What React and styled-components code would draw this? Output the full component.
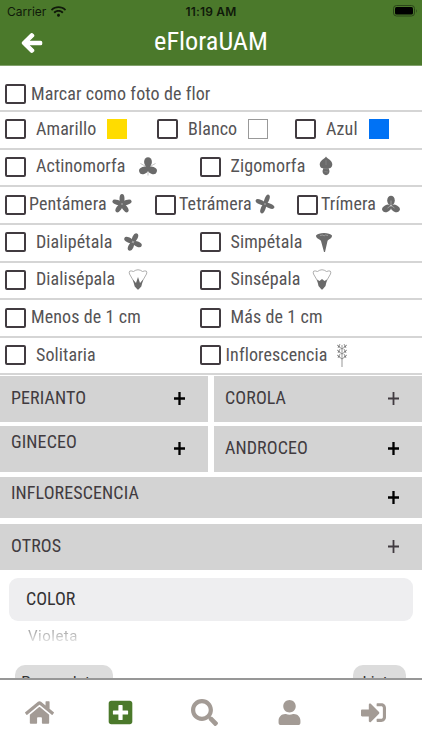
import React, { useState } from 'react';
import styled, { createGlobalStyle } from 'styled-components';
import { FaArrowLeft, FaHome, FaPlusSquare, FaSearch, FaUser, FaSignInAlt, FaWifi } from 'react-icons/fa';

const GlobalStyle = createGlobalStyle`
  * {
    box-sizing: border-box;
  }
  body {
    margin: 0;
    background: #fff;
    color: #555355;
    font-family: 'Roboto Condensed', Roboto, sans-serif;
    font-stretch: 75%;
    font-size: 18px;
  }
`;

const Screen = styled.div`
  width: 422px;
  height: 750px;
  overflow: hidden;
  display: flex;
  flex-direction: column;
`;

const Header = styled.header`
  height: 66px;
  flex-shrink: 0;
  background: #4b792b;
  border-bottom: 1px solid #82a16c;
`;

const StatusBar = styled.div`
  height: 22px;
  padding: 0 7px;
  display: grid;
  grid-template-columns: 1fr auto 1fr;
  align-items: center;
  color: #10190a;
  font-family: Inter, sans-serif;
  font-stretch: 100%;
  font-size: 12px;
`;

const Carrier = styled.div`
  display: flex;
  align-items: center;
  gap: 5px;
`;

const Clock = styled.div`
  font-weight: 600;
  letter-spacing: 0.2px;
`;

const BatteryIcon = styled.svg`
  justify-self: end;
  margin-right: -3px;
  margin-top: -1px;
`;

const TitleBar = styled.div`
  height: 38px;
  padding: 0 21px;
  display: grid;
  grid-template-columns: 1fr auto 1fr;
  align-items: center;
  color: #fff;
`;

const BackIcon = styled(FaArrowLeft)`
  margin-top: 4px;
  font-size: 22px;
  stroke: #fff;
  stroke-width: 30px;
`;

const Title = styled.h1`
  margin: 0;
  font-size: 26.3px;
  font-weight: 400;
  line-height: 38px;
`;

const Content = styled.main`
  flex: 1;
  min-height: 0;
  overflow: hidden;
`;

const OptionRow = styled.div`
  display: grid;
  grid-template-columns: ${({ $columns }) => $columns || '1fr'};
  align-items: center;
  height: ${({ $height }) => $height || 37.65}px;
  padding: ${({ $height }) => ($height ? '13px' : '0')} 0 1px 5px;
  border-bottom: 2px solid #d5d5d5;
`;

const Option = styled.label`
  display: flex;
  align-items: center;
  height: 22px;
  white-space: nowrap;
`;

const Box = styled.span`
  width: 21px;
  height: 20px;
  flex-shrink: 0;
  border: 2px solid #413b40;
  border-radius: 2px;
  background: ${({ $checked }) => ($checked ? '#4b792b' : '#fff')};
`;

const OptionText = styled.span`
  margin-left: ${({ $gap }) => $gap}px;
  margin-top: -1px;
  line-height: 22px;
  letter-spacing: 0.1px;
`;

const Swatch = styled.span`
  width: 20px;
  height: 20px;
  margin-left: 11px;
  background: ${({ $color }) => $color};
  border: 1px solid ${({ $border, $color }) => $border || $color};
`;

const Drawing = styled.svg`
  width: 20px;
  height: 24px;
  flex-shrink: 0;
  margin-top: -1px;
  margin-left: ${({ $gap }) => $gap}px;
  color: #6a6a6a;
`;

const PanelGrid = styled.div`
  display: grid;
  grid-template-columns: 208px 208px;
  column-gap: 6px;
  row-gap: 4px;
  padding-top: 1px;
`;

const Panel = styled.button`
  display: flex;
  justify-content: space-between;
  align-items: center;
  width: 100%;
  height: ${({ $height }) => $height || 46}px;
  margin: 0;
  margin-top: ${({ $top }) => $top || 0}px;
  padding: 0 22px 2px 11px;
  border: 0;
  background: #d3d3d3;
  color: #413b40;
  font: inherit;
  text-align: left;
`;

const PanelTitle = styled.span`
  line-height: 22px;
  padding-bottom: ${({ $raise }) => $raise || 0}px;
  letter-spacing: 0.1px;
`;

const Plus = styled.svg`
  width: 13px;
  height: 15px;
  margin-top: 1px;
  color: ${({ $strong }) => ($strong ? '#000' : '#413b40')};
`;

const ColorHeading = styled.div`
  height: 43px;
  margin: 8px 9px 0;
  padding-left: 17px;
  border-radius: 9px;
  background: #eeeef0;
  color: #343234;
  line-height: 42px;
`;

const ColorValue = styled.div`
  height: 20px;
  margin: 0 28px;
  padding-top: 5px;
  overflow: hidden;
  font-family: Roboto, sans-serif;
  font-stretch: 100%;
  font-size: 15px;
  line-height: 20px;
  letter-spacing: 0.5px;
  color: transparent;
  background: linear-gradient(#999 35%, #ddd 100%);
  background-clip: text;
`;

const Actions = styled.div`
  display: flex;
  justify-content: space-between;
  margin-top: 24px;
  padding: 0 16px 0 15px;
`;

const ActionButton = styled.button`
  display: flex;
  align-items: flex-start;
  justify-content: center;
  width: ${({ $width }) => $width}px;
  height: 34px;
  padding: 3px 0 0;
  border: 0;
  border-radius: 10px;
  background: #dcdcdc;
  color: #333;
  font-family: Roboto, sans-serif;
  font-stretch: 100%;
  font-size: 15.6px;
  line-height: 30px;
`;

const TabBar = styled.nav`
  height: 72px;
  flex-shrink: 0;
  display: grid;
  grid-template-columns: 79px 83px 84px 86px 82px;
  justify-items: center;
  align-items: start;
  padding-top: 18px;
  border-top: 2px solid #979797;
  background: #fff;
`;

const Tab = styled.button`
  display: flex;
  align-items: center;
  height: 28px;
  margin: 0;
  padding: 0;
  border: 0;
  background: none;
  color: ${({ $active }) => ($active ? '#4b792b' : '#a39b95')};
  font-size: ${({ $size }) => $size}px;
`;

const Petals = ({ angles, gap, ry = 5, rx = 3, y = 12 }) => (
  <Drawing $gap={gap} viewBox="0 0 20 24">
    <g fill="currentColor">
      {angles.map((a) => (
        <ellipse key={a} cx="10" cy={y - 5} rx={rx} ry={ry} transform={`rotate(${a} 10 ${y})`} />
      ))}
    </g>
    <circle cx="10" cy={y} r="1" fill="#999" />
  </Drawing>
);

const ThreePetals = ({ gap }) => (
  <Drawing $gap={gap} viewBox="0 0 20 24">
    <path d="M10 14V21.5M10 13.5L2.5 9.5M10 13.5L17.5 9.5" stroke="#aaa" strokeWidth=".7" />
    <g fill="currentColor">
      <ellipse cx="10" cy="8" rx="3.9" ry="4.8" />
      <ellipse cx="5.6" cy="16.4" rx="4.6" ry="3.5" transform="rotate(-20 5.6 16.4)" />
      <ellipse cx="14.4" cy="16.4" rx="4.6" ry="3.5" transform="rotate(20 14.4 16.4)" />
      <circle cx="10" cy="13.5" r="2.5" />
    </g>
  </Drawing>
);

const Trefoil = ({ gap }) => (
  <Drawing $gap={gap} viewBox="0 0 20 24">
    <g fill="currentColor">
      <ellipse cx="10" cy="8.5" rx="3.8" ry="4.8" />
      <ellipse cx="5.6" cy="16.4" rx="4.7" ry="3.4" transform="rotate(-28 5.6 16.4)" />
      <ellipse cx="14.4" cy="16.4" rx="4.7" ry="3.4" transform="rotate(28 14.4 16.4)" />
    </g>
    <path d="M10 8.5V13.5L6.5 16M10 13.5L13.5 16" fill="none" stroke="#b5b5b5" strokeWidth=".7" />
  </Drawing>
);

const Orchid = ({ gap }) => (
  <Drawing $gap={gap} viewBox="0 0 20 24">
    <path
      d="M10 2.5C11.5 5 16.3 6 16.3 10.5C16 14.5 13 14.5 12.6 14.2L13.5 17C13.5 22.5 6.5 22.5 6.5 17L7.4 14.2C6 14.5 4 14 3.7 10.5C4 6 8.5 5 10 2.5Z"
      fill="currentColor"
    />
    <path d="M10 6V11M8 14.5L12 15M8.5 17.5L12 18" stroke="#999" strokeWidth=".5" />
  </Drawing>
);

const Funnel = ({ gap }) => (
  <Drawing $gap={gap} viewBox="0 0 20 24">
    <path
      d="M2 5.5C4 2 16 2 18 5.5C18 9 14.5 9 13.5 11L11 22H10L7 11C6 9 2 9 2 5.5Z"
      fill="currentColor"
    />
    <path d="M6 5.5L9 5L10 6L11.5 5L14 5.5" fill="none" stroke="#aaa" strokeWidth=".7" />
  </Drawing>
);

const Calyx = ({ gap, fused }) => (
  <Drawing $gap={gap} viewBox="0 0 20 24">
    <path
      d="M9 20L1.5 7Q0 2.5 5.5 4.5Q10 1 14.5 4.5Q20 2.5 18.5 7L11 20"
      fill="none"
      stroke="#999"
      strokeWidth=".8"
    />
    <path
      d={
        fused
          ? 'M5 12.5L7.5 14L10 12L12.5 14L15 12.5L13.5 19L10.5 22.5H9.5L6.5 19Z'
          : 'M4.8 12.5L8 16L10 10L12 16L15.2 12.5L13.3 19.5L10.5 22.5H9.5L6.7 19.5Z'
      }
      fill="currentColor"
    />
  </Drawing>
);

const Spike = ({ gap }) => (
  <Drawing $gap={gap} viewBox="0 0 20 24">
    <path
      d="M10 2V24M10 6L6 3M10 6L14 3M10 11L6 8M10 11L14 8M10 16L6 13M10 16L14 13M5 2L8 4M8 1L6 5M12 1L14 5M12 4L15 2M5 7L8 9M8 6L6 10M12 6L14 10M12 9L15 7M5 12L8 14M8 11L6 15M12 11L14 15M12 14L15 12"
      stroke="currentColor"
      strokeWidth=".7"
    />
  </Drawing>
);

const PlusIcon = ({ strong }) => (
  <Plus $strong={strong} viewBox="0 0 13 15">
    <path d="M6.5 1V14M1 7.5H12" stroke="currentColor" strokeWidth={strong ? 2.3 : 1.8} />
  </Plus>
);

function CheckOption({ text, gap = 10, children }) {
  const [checked, setChecked] = useState(false);

  return (
    <Option onClick={() => setChecked(!checked)}>
      <Box $checked={checked} />
      <OptionText $gap={gap}>{text}</OptionText>
      {children}
    </Option>
  );
}

const HALVES = '194.5px 1fr';

function App() {
  return (
    <Screen>
      <GlobalStyle />
      <Header>
        <StatusBar>
          <Carrier>
            Carrier <FaWifi size={15} />
          </Carrier>
          <Clock>11:19 AM</Clock>
          <BatteryIcon width="25" height="12" viewBox="0 0 25 12">
            <rect x=".5" y=".5" width="21" height="10.5" rx="3" fill="none" stroke="#2b4519" />
            <rect x="2" y="2" width="18" height="7.5" rx="1.5" fill="#000" />
            <path d="M23 4V8Q24.5 6 23 4Z" fill="#2b4519" />
          </BatteryIcon>
        </StatusBar>
        <TitleBar>
          <BackIcon />
          <Title>eFloraUAM</Title>
        </TitleBar>
      </Header>

      <Content>
        <OptionRow $height={46}>
          <CheckOption text="Marcar como foto de flor" gap={5} />
        </OptionRow>
        <OptionRow $columns="152px 138px 1fr">
          <CheckOption text="Amarillo"><Swatch $color="#ffdc00" /></CheckOption>
          <CheckOption text="Blanco"><Swatch $color="#fff" $border="#999" /></CheckOption>
          <CheckOption text="Azul"><Swatch $color="#0072f5" /></CheckOption>
        </OptionRow>
        <OptionRow $columns={HALVES}>
          <CheckOption text="Actinomorfa"><ThreePetals gap={12} /></CheckOption>
          <CheckOption text="Zigomorfa"><Orchid gap={11} /></CheckOption>
        </OptionRow>
        <OptionRow $columns="150px 142px 1fr">
          <CheckOption text="Pentámera" gap={3}><Petals gap={5} angles={[0, 72, 144, 216, 288]} rx={2.5} /></CheckOption>
          <CheckOption text="Tetrámera" gap={3}><Petals gap={3} angles={[22, 112, 202, 292]} rx={2.3} /></CheckOption>
          <CheckOption text="Trímera" gap={3}><Trefoil gap={5} /></CheckOption>
        </OptionRow>
        <OptionRow $columns={HALVES}>
          <CheckOption text="Dialipétala"><Petals gap={11} angles={[25, 115, 205, 295]} rx={2.6} ry={4.5} /></CheckOption>
          <CheckOption text="Simpétala"><Funnel gap={12} /></CheckOption>
        </OptionRow>
        <OptionRow $columns={HALVES}>
          <CheckOption text="Dialisépala"><Calyx gap={13} /></CheckOption>
          <CheckOption text="Sinsépala"><Calyx gap={12} fused /></CheckOption>
        </OptionRow>
        <OptionRow $columns={HALVES}>
          <CheckOption text="Menos de 1 cm" gap={5} />
          <CheckOption text="Más de 1 cm" />
        </OptionRow>
        <OptionRow $columns={HALVES}>
          <CheckOption text="Solitaria" />
          <CheckOption text="Inflorescencia" gap={5}><Spike gap={5} /></CheckOption>
        </OptionRow>

        <PanelGrid>
          <Panel><PanelTitle>PERIANTO</PanelTitle><PlusIcon strong /></Panel>
          <Panel><PanelTitle>COROLA</PanelTitle><PlusIcon /></Panel>
          <Panel><PanelTitle $raise={12}>GINECEO</PanelTitle><PlusIcon strong /></Panel>
          <Panel><PanelTitle>ANDROCEO</PanelTitle><PlusIcon strong /></Panel>
        </PanelGrid>
        <Panel $height={41} $top={5}><PanelTitle $raise={8}>INFLORESCENCIA</PanelTitle><PlusIcon strong /></Panel>
        <Panel $top={6}><PanelTitle>OTROS</PanelTitle><PlusIcon /></Panel>

        <ColorHeading>COLOR</ColorHeading>
        <ColorValue>Violeta</ColorValue>
        <Actions>
          <ActionButton $width={98}>Borrar datos</ActionButton>
          <ActionButton $width={53}>Listo</ActionButton>
        </Actions>
      </Content>

      <TabBar>
        <Tab $size={29}><FaHome /></Tab>
        <Tab $size={27} $active><FaPlusSquare /></Tab>
        <Tab $size={27}><FaSearch /></Tab>
        <Tab $size={25}><FaUser /></Tab>
        <Tab $size={25}><FaSignInAlt /></Tab>
      </TabBar>
    </Screen>
  );
}

export default App;
